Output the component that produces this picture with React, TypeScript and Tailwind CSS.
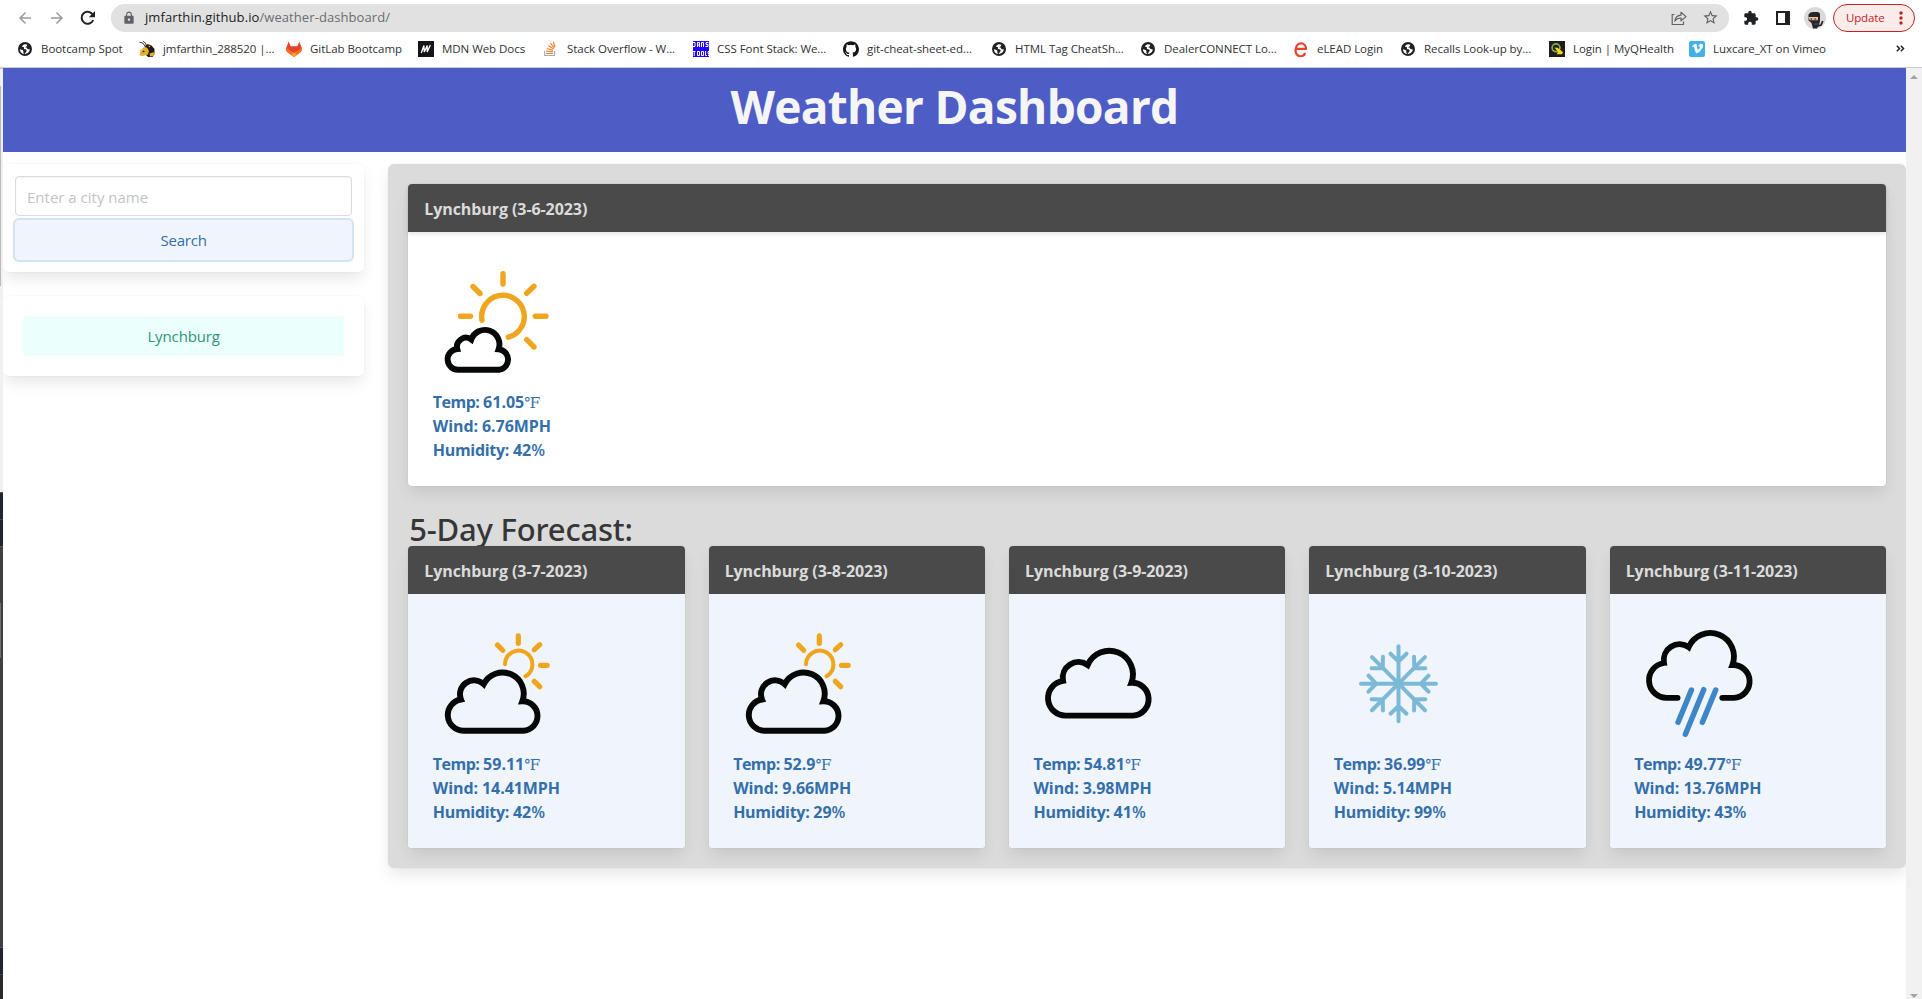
import React from "react";
import {
  MdArrowBack,
  MdArrowForward,
  MdLock,
  MdStarBorder,
  MdExtension,
} from "react-icons/md";
import { SiGithub, SiVimeo } from "react-icons/si";

/* ---------- bookmark icons ---------- */

const Globe = () => (
  <svg viewBox="0 0 16 16" className="size-4">
    <circle cx="8" cy="8" r="7" fill="#202124" />
    <path
      d="M7.800 3.200A5 5 0 0 0 4.800 5.400L7 6.200 6.900 8 9.300 8.600 9.700 10 7.500 12.900A5 5 0 0 0 12.900 8.600L10.500 7.900 9.500 6.600 8 6.200 9.800 5.200 10.300 3.700A5 5 0 0 0 7.800 3.200ZM2.900 8.200 5.600 8.900 6.500 10 6.200 11 7 12.900A5 5 0 0 1 2.900 8.200Z"
      fill="#fff"
    />
  </svg>
);

const Hornet = () => (
  <svg viewBox="0 0 16 16" className="size-4">
    <path d="M0.500 1.200 4 2.200 6.500 6M4 0.300 6.500 2 7.500 5.500" stroke="#222" strokeWidth="0.900" fill="none" />
    <path d="M6 5.500 8.500 3l4 1.500L15.500 8v5l-2 3H9l-3-3Z" fill="#1b1a17" />
    <path d="M1.500 9.500 5 6l3 .5L10 10l-1 3.500L4 15l-3.500-.5Z" fill="#e5b02c" />
    <path d="m9 4.500 2.500.5-1 1.500ZM10.500 12.500l5-1.500-1 4-3.500.5Z" fill="#e5b02c" />
    <path d="m4 9.500 2 1-2.500 1Z" fill="#1b1a17" />
  </svg>
);

const Gitlab = () => (
  <svg viewBox="0 0 16 16" className="size-4">
    <path d="M2.700.4.300 6.800a4.400 4.400 0 0 0 1.500 4.800L8 16l6.200-4.400a4.400 4.400 0 0 0 1.500-4.800L13.300.4l-2 5.200H4.700Z" fill="#e24329" />
    <path d="m15.700 6.800-3.200 1.400L8 11.500 3.500 8.200.3 6.800a4.400 4.400 0 0 0 1.500 4.800L8 16l6.200-4.400a4.400 4.400 0 0 0 1.500-4.800Z" fill="#fc6d26" />
    <path d="m8 11.500-3 2.400L8 16l3-2.100Z" fill="#fca326" />
    <path d="M.3 6.800 5 10.200 8 11.500l3-1.300 4.700-3.400L11.300 5.600H4.700Z" fill="#e24329" />
  </svg>
);

const Mdn = () => (
  <svg viewBox="0 0 16 16" className="size-4">
    <rect width="16" height="16" fill="#15141a" />
    <path d="M3.300 12 5.900 4.500 6.300 11 9.200 4.500V11L12.300 4" stroke="#fff" strokeWidth="1.300" fill="none" strokeLinejoin="bevel" />
  </svg>
);

const StackOverflow = () => (
  <svg viewBox="0 0 16 16" className="size-4">
    <path d="M1.600 10v4.500h10V10" stroke="#aaa" strokeWidth="1.100" fill="none" />
    <path d="M3 12.500h7M3.100 10.200l6.800.7M3.700 7.500l6.300 1.900M5.300 4.600l5.300 3.500M7.500 2.200l3.900 4.900M10.300.8l1.700 5.200" stroke="#ef8236" strokeWidth="1.200" fill="none" />
  </svg>
);

const DansTools = () => (
  <svg viewBox="0 0 16 16" className="size-4">
    <rect width="16" height="16" fill="#2200ff" />
    <path
      d="M0 1.500h2v4H0M4.500 6V1.500h2V6M4.500 4h2M8.500 6V1.500h2V6M15.500 1.500h-2.500v2h2v2h-2.500M0 10.500h2.500M1.200 10.500V15M4.500 10.500h2v4h-2ZM8.500 10.500h2v4h-2ZM12.500 10v4.500H14M16 10.500h-1v2h1v2h-1"
      stroke="#fff"
      strokeWidth="1"
      fill="none"
    />
  </svg>
);

const Elead = () => (
  <svg viewBox="0 0 16 16" className="size-4">
    <path d="M3 7.800H13A5 5.300 0 0 0 3 7.500 5 5.600 0 0 0 12.200 12" stroke="#e8432f" strokeWidth="2.300" fill="none" />
  </svg>
);

const MyQ = () => (
  <svg viewBox="0 0 16 16" className="size-4">
    <rect width="16" height="16" fill="#1e1e1e" />
    <circle cx="7" cy="6.800" r="3.900" fill="none" stroke="#7fb241" strokeWidth="1.700" />
    <path d="m5.500 6.500 3 .3 5.500 4.500-1 2H7.500L9 11Z" fill="#f7d417" />
  </svg>
);

const Vimeo = () => (
  <span className="flex size-4 items-center justify-center rounded-[2px] bg-[#41b1ed] text-white">
    <SiVimeo className="size-[11px]" />
  </span>
);

const bookmarks: { label: string; icon: React.ReactNode; width: string }[] = [
  { label: "Bootcamp Spot", icon: <Globe />, width: "w-[122px]" },
  { label: "jmfarthin_288520 |...", icon: <Hornet />, width: "w-[147px]" },
  { label: "GitLab Bootcamp", icon: <Gitlab />, width: "w-[132px]" },
  { label: "MDN Web Docs", icon: <Mdn />, width: "w-[125px]" },
  { label: "Stack Overflow - W...", icon: <StackOverflow />, width: "w-[150px]" },
  { label: "CSS Font Stack: We...", icon: <DansTools />, width: "w-[150px]" },
  { label: "git-cheat-sheet-ed...", icon: <SiGithub className="size-4 text-[#161614]" />, width: "w-[148px]" },
  { label: "HTML Tag CheatSh...", icon: <Globe />, width: "w-[149px]" },
  { label: "DealerCONNECT Lo...", icon: <Globe />, width: "w-[153px]" },
  { label: "eLEAD Login", icon: <Elead />, width: "w-[107px]" },
  { label: "Recalls Look-up by...", icon: <Globe />, width: "w-[149px]" },
  { label: "Login | MyQHealth", icon: <MyQ />, width: "w-[140px]" },
  { label: "Luxcare_XT on Vimeo", icon: <Vimeo />, width: "w-[150px]" },
];

/* ---------- browser chrome ---------- */

function ReloadIcon() {
  return (
    <svg viewBox="0 0 16 16" className="size-4">
      <path d="M13.200 10A6 6 0 1 1 12.600 4.400" fill="none" stroke="#202124" strokeWidth="2" />
      <path d="M15 1V7.200H8.800Z" fill="#202124" />
    </svg>
  );
}

function ShareIcon() {
  return (
    <svg viewBox="0 0 16 16" className="size-4" fill="none" stroke="#5f6368" strokeWidth="1.200">
      <path d="M3.500 4.500H1.200v10h11.300V11.500" />
      <path d="M3.800 11C4.300 7.500 6.500 5.400 10 5.200V2.300L15 6.600l-5 4.200V8C7.500 7.900 5.500 8.800 3.800 11Z" strokeLinejoin="round" />
    </svg>
  );
}

function Avatar() {
  return (
    <svg viewBox="0 0 22 22" className="size-[22px]">
      <circle cx="11" cy="11" r="11" fill="#dadada" />
      <path d="M4.500 7.500 6.500 5.500 9 5h5l2 1.500V14L15 18l-2 3.500h-4L7.500 16 4.500 13.500Z" fill="#262626" />
      <path d="M4.600 10.200h9.400v3h-8.500Z" fill="#dba97d" />
      <path d="M4.600 10.200h9.400v1h-9.400Z" fill="#f1d9c2" />
      <path d="M6.500 12h1.500M10.500 12h1.500" stroke="#222" strokeWidth="1" />
      <path d="m12 19.500 5-1.500 1.800-4" stroke="#262626" strokeWidth="1.800" fill="none" />
      <path d="M10.500 17h3.500" stroke="#28549b" strokeWidth="1.200" />
    </svg>
  );
}

function Toolbar() {
  return (
    <div className="flex h-[34px] shrink-0 items-center pt-[1px]">
      <div className="flex w-[111px] shrink-0 items-center gap-[14px] pl-4 text-[18px]">
        <MdArrowBack className="text-[#9b9b9b]" />
        <MdArrowForward className="text-[#9b9b9b]" />
        <ReloadIcon />
      </div>
      <div className="flex h-7 w-[1618px] shrink-0 items-center rounded-full bg-[#e1e1e1] pr-[10px] pl-[11px]">
        <MdLock className="size-[14px] text-[#5f6368]" />
        <span className="ml-[9px] flex-1 text-[13px] tracking-[0.080px] whitespace-nowrap text-[#6a6d71]">
          <span className="text-[#202124]">jmfarthin.github.io</span>/weather-dashboard/
        </span>
        <ShareIcon />
        <MdStarBorder className="ml-[15px] size-[17px] text-[#5f6368]" />
      </div>
      <MdExtension className="ml-[14px] size-4 text-[#202124]" />
      <svg viewBox="0 0 14 14" className="ml-[17px] size-[14px]">
        <path d="M0 0h14v14H0ZM2 2v10h7V2Z" fill="#202124" fillRule="evenodd" />
      </svg>
      <div className="ml-[14px]">
        <Avatar />
      </div>
      <div className="ml-[7px] flex h-7 w-[82px] items-center rounded-full border border-[#c5221f] bg-[#fbecec] pl-3 text-[#c5221f]">
        <span className="flex-1 text-[11.500px] tracking-[-0.150px]">Update</span>
        <svg viewBox="0 0 4 14" className="mr-[11px] h-[14px] w-1 fill-[#c5221f]">
          <circle cx="2" cy="2" r="1.700" />
          <circle cx="2" cy="7" r="1.700" />
          <circle cx="2" cy="12" r="1.700" />
        </svg>
      </div>
    </div>
  );
}

function BookmarksBar() {
  return (
    <div className="flex h-[34px] shrink-0 items-center border-b border-[#cbcbcb] pb-1 pl-[17px]">
      {bookmarks.map((b) => (
        <div key={b.label} className={`flex shrink-0 items-center gap-2 ${b.width}`}>
          {b.icon}
          <span className="text-[11.500px] tracking-[-0.050px] whitespace-nowrap text-[#303134]">{b.label}</span>
        </div>
      ))}
      <svg viewBox="0 0 9 7" className="mr-[17px] ml-auto h-[7px] w-[9px]" fill="none" stroke="#202124" strokeWidth="1.500">
        <path d="m.8.800 2.700 2.700L.8 6.200M4.800.800l2.700 2.700-2.700 2.700" />
      </svg>
    </div>
  );
}

/* ---------- weather drawings ---------- */

const SUN = "#efa61e";
const INK = "#050807";

function BigSun() {
  return (
    <svg viewBox="0 0 128 128" className="size-32" fill="none">
      <g stroke={SUN} strokeWidth="5.400" strokeLinecap="round">
        <path d="M50 64.300A21.300 21.300 0 1 1 76.300 81.200" />
        <path d="M71 17.800V28M102 30.300 94.700 37.300M41 30.500 48 37.500M28.500 60.300H38.500M103.300 60.300H114M94.700 83.700 102 91" />
      </g>
      <path
        d="M26.700 113.700A10.300 10.300 0 0 1 25.300 93A9 9 0 0 1 39.300 83.500A14.400 14.400 0 0 1 66.600 93.300A10.300 10.300 0 0 1 67.600 113.700Z"
        stroke={INK}
        strokeWidth="5.900"
      />
    </svg>
  );
}

function SunCloud() {
  return (
    <svg viewBox="0 0 128 128" className="size-32" fill="none">
      <g stroke={SUN} strokeLinecap="round">
        <path d="M73 46.300A13.700 13.700 0 1 1 93.500 58.300" strokeWidth="4" />
        <path
          d="M86.300 17.800V25.300M107.700 26.700 102.300 31.700M65.500 27 70.700 32.300M108.500 47.300H115.200M102.300 63.300 107.700 68.700"
          strokeWidth="5.200"
        />
      </g>
      <path
        d="M31.300 112.700A15.700 15.700 0 0 1 29 81.500A14 14 0 0 1 51.700 66.200A21.130 21.130 0 0 1 90.300 83.300A14.700 14.700 0 0 1 91.300 112.700Z"
        stroke={INK}
        strokeWidth="5.900"
      />
    </svg>
  );
}

function Cloud() {
  return (
    <svg viewBox="0 0 128 128" className="size-32" fill="none">
      <path
        d="M33.300 97.600A17.500 17.500 0 0 1 30 62.800A15.800 15.800 0 0 1 54.700 47A23.600 23.600 0 0 1 98.400 64.800A16.400 16.400 0 0 1 100 97.600Z"
        stroke={INK}
        strokeWidth="5.900"
      />
    </svg>
  );
}

function Snow() {
  return (
    <svg viewBox="0 0 128 128" className="size-32" fill="none">
      <g transform="translate(65.500 65.700)" stroke="#7cb9d6" strokeWidth="4" strokeLinecap="round">
        {[0, 45, 90, 135, 180, 225, 270, 315].map((angle) => (
          <path key={angle} transform={`rotate(${angle})`} d="M0 0V-37.500M-8-30 0-22.300 8-30" />
        ))}
      </g>
      <circle cx="65.500" cy="65.700" r="5" fill="#7cb9d6" />
    </svg>
  );
}

function Rain() {
  return (
    <svg viewBox="0 0 128 128" className="size-32" fill="none">
      <path
        d="M43.600 79.800H33.300A17.500 17.500 0 0 1 30 45A15.800 15.800 0 0 1 54.700 29.200A23.600 23.600 0 0 1 98.400 47A16.400 16.400 0 0 1 100 79.800H88.300"
        stroke={INK}
        strokeWidth="5.800"
        strokeLinecap="round"
      />
      <path
        d="M57.400 72 44.100 104.300M69.700 71.700 51.400 116.300M81.700 72 68.400 104.300"
        stroke="#3d87c8"
        strokeWidth="5.500"
        strokeLinecap="round"
      />
    </svg>
  );
}

/* ---------- weather data ---------- */

type Day = { date: string; icon: React.ReactNode; temp: string; wind: string; humidity: string };

const today: Day = { date: "3-6-2023", icon: <BigSun />, temp: "61.05", wind: "6.76", humidity: "42" };

const forecast: Day[] = [
  { date: "3-7-2023", icon: <SunCloud />, temp: "59.11", wind: "14.41", humidity: "42" },
  { date: "3-8-2023", icon: <SunCloud />, temp: "52.9", wind: "9.66", humidity: "29" },
  { date: "3-9-2023", icon: <Cloud />, temp: "54.81", wind: "3.98", humidity: "41" },
  { date: "3-10-2023", icon: <Snow />, temp: "36.99", wind: "5.14", humidity: "99" },
  { date: "3-11-2023", icon: <Rain />, temp: "49.77", wind: "13.76", humidity: "43" },
];

const softShadow = "shadow-[0_8px_16px_-2px_rgba(10,10,10,0.1),0_0_0_1px_rgba(10,10,10,0.02)]";

function WeatherCard({ day, header, tint }: { day: Day; header: string; tint: string }) {
  return (
    <div className={`rounded bg-white ${softShadow}`}>
      <div
        className={`flex h-12 items-center rounded-t bg-[#4a4a4a] px-4 pt-px text-[16px] font-bold tracking-[-0.080px] text-[#dbdbdb] ${header}`}
      >
        Lynchburg ({day.date})
      </div>
      <div className={`h-[254px] rounded-b p-6 text-[16px] leading-6 font-bold text-[#346fa9] ${tint}`}>
        <div className="h-[134px]">{day.icon}</div>
        <div className="pl-[0.500px]">
          <div>
            <span className="tracking-[-0.500px]">Temp: </span>
            {day.temp}
            <span className="font-['DejaVu_Serif',serif] text-[15px] leading-none font-normal">℉</span>
          </div>
          <div className="tracking-[-0.080px]">Wind: {day.wind}MPH</div>
          <div>
            <span className="tracking-[-0.300px]">Humidity: </span>
            {day.humidity}
            <span className="font-semibold">%</span>
          </div>
        </div>
      </div>
    </div>
  );
}

/* ---------- page ---------- */

function EdgeStrip() {
  return (
    <div className="flex w-[3px] shrink-0 flex-col bg-[#f0f0f0]">
      <div className="h-[18px] border-t border-[#cbcbcb]" />
      <div className="h-[200px] border-l border-[#b9b9b9]" />
      <div className="h-[206px]" />
      <div className="h-[27px] border-t border-[#55565a] bg-[#23252d]" />
      <div className="h-[27px] border-t border-[#44464d] bg-[#23252d]" />
      <div className="h-[57px] border-t border-[#55565a] bg-[#404040]" />
      <div className="h-[55px] border-l border-[#6e6e6e] bg-[#404040]" />
      <div className="h-[289px] bg-[#404040]" />
      <div className="h-[27px] border-t border-[#55565a] bg-[#23252d]" />
      <div className="flex-1 border-t border-[#44464d] bg-[#2a2a2c]" />
    </div>
  );
}

function Sidebar() {
  return (
    <aside className="flex w-[361.300px] shrink-0 flex-col gap-6">
      <div className={`h-[108px] rounded-md bg-white px-3 pt-3 ${softShadow}`}>
        <input
          className="block h-10 w-full rounded border border-[#dbdbdb] bg-white px-[11px] pt-[2px] text-[15px] shadow-[inset_0_1px_2px_rgba(10,10,10,0.05)] placeholder:text-[#c3c3c3]"
          placeholder="Enter a city name"
        />
        <button className="mt-[4px] block h-10 w-full rounded bg-[#f0f4fc] text-[15px] tracking-[-0.200px] text-[#346fa9] shadow-[0_0_0_2px_#d2e3f3]">
          Search
        </button>
      </div>
      <div className={`h-20 rounded-md bg-white p-5 ${softShadow}`}>
        <button className="block h-10 w-full rounded bg-[#ebfffc] text-[15px] tracking-[-0.120px] text-[#2f937c]">
          Lynchburg
        </button>
      </div>
    </aside>
  );
}

export default function App() {
  return (
    <div className="flex h-[999px] w-[1922px] flex-col overflow-hidden bg-white font-['Open_Sans','Noto_Sans',sans-serif]">
      <Toolbar />
      <BookmarksBar />
      <div className="flex min-h-0 flex-1">
        <EdgeStrip />
        <div className="w-[1903px] shrink-0 overflow-hidden">
          <header className="flex h-[84px] items-center justify-center bg-[#4e5dc5]">
            <h1 className="pb-[8px] text-[46px] leading-none font-bold tracking-[-0.700px] text-[#f5f5f5]">
              Weather Dashboard
            </h1>
          </header>
          <div className="flex items-start gap-6 pt-3">
            <Sidebar />
            <main className={`flex-1 rounded-md bg-[#dbdbdb] p-5 ${softShadow}`}>
              <WeatherCard day={today} header="shadow-[0_2px_4px_rgba(10,10,10,0.1)]" tint="" />
              <h2 className="mt-6 h-9 pt-px pl-px font-['Noto_Sans'] text-[31px] leading-9 font-medium tracking-[-0.200px] text-[#363636]">
                5-Day Forecast:
              </h2>
              <div className="relative grid grid-cols-5 gap-6">
                {forecast.map((d) => (
                  <WeatherCard key={d.date} day={d} header="" tint="bg-[#f0f4fb]" />
                ))}
              </div>
            </main>
          </div>
        </div>
        <div className="flex w-4 shrink-0 flex-col items-center justify-between bg-[#f1f1f1] pt-[7px]">
          <svg viewBox="0 0 8 4" className="h-1 w-2">
            <path d="M4 0 8 4H0Z" fill="#a3a3a3" />
          </svg>
          <svg viewBox="0 0 8 4" className="mb-px h-1 w-2">
            <path d="M0 0H8L4 4Z" fill="#a3a3a3" />
          </svg>
        </div>
      </div>
    </div>
  );
}
